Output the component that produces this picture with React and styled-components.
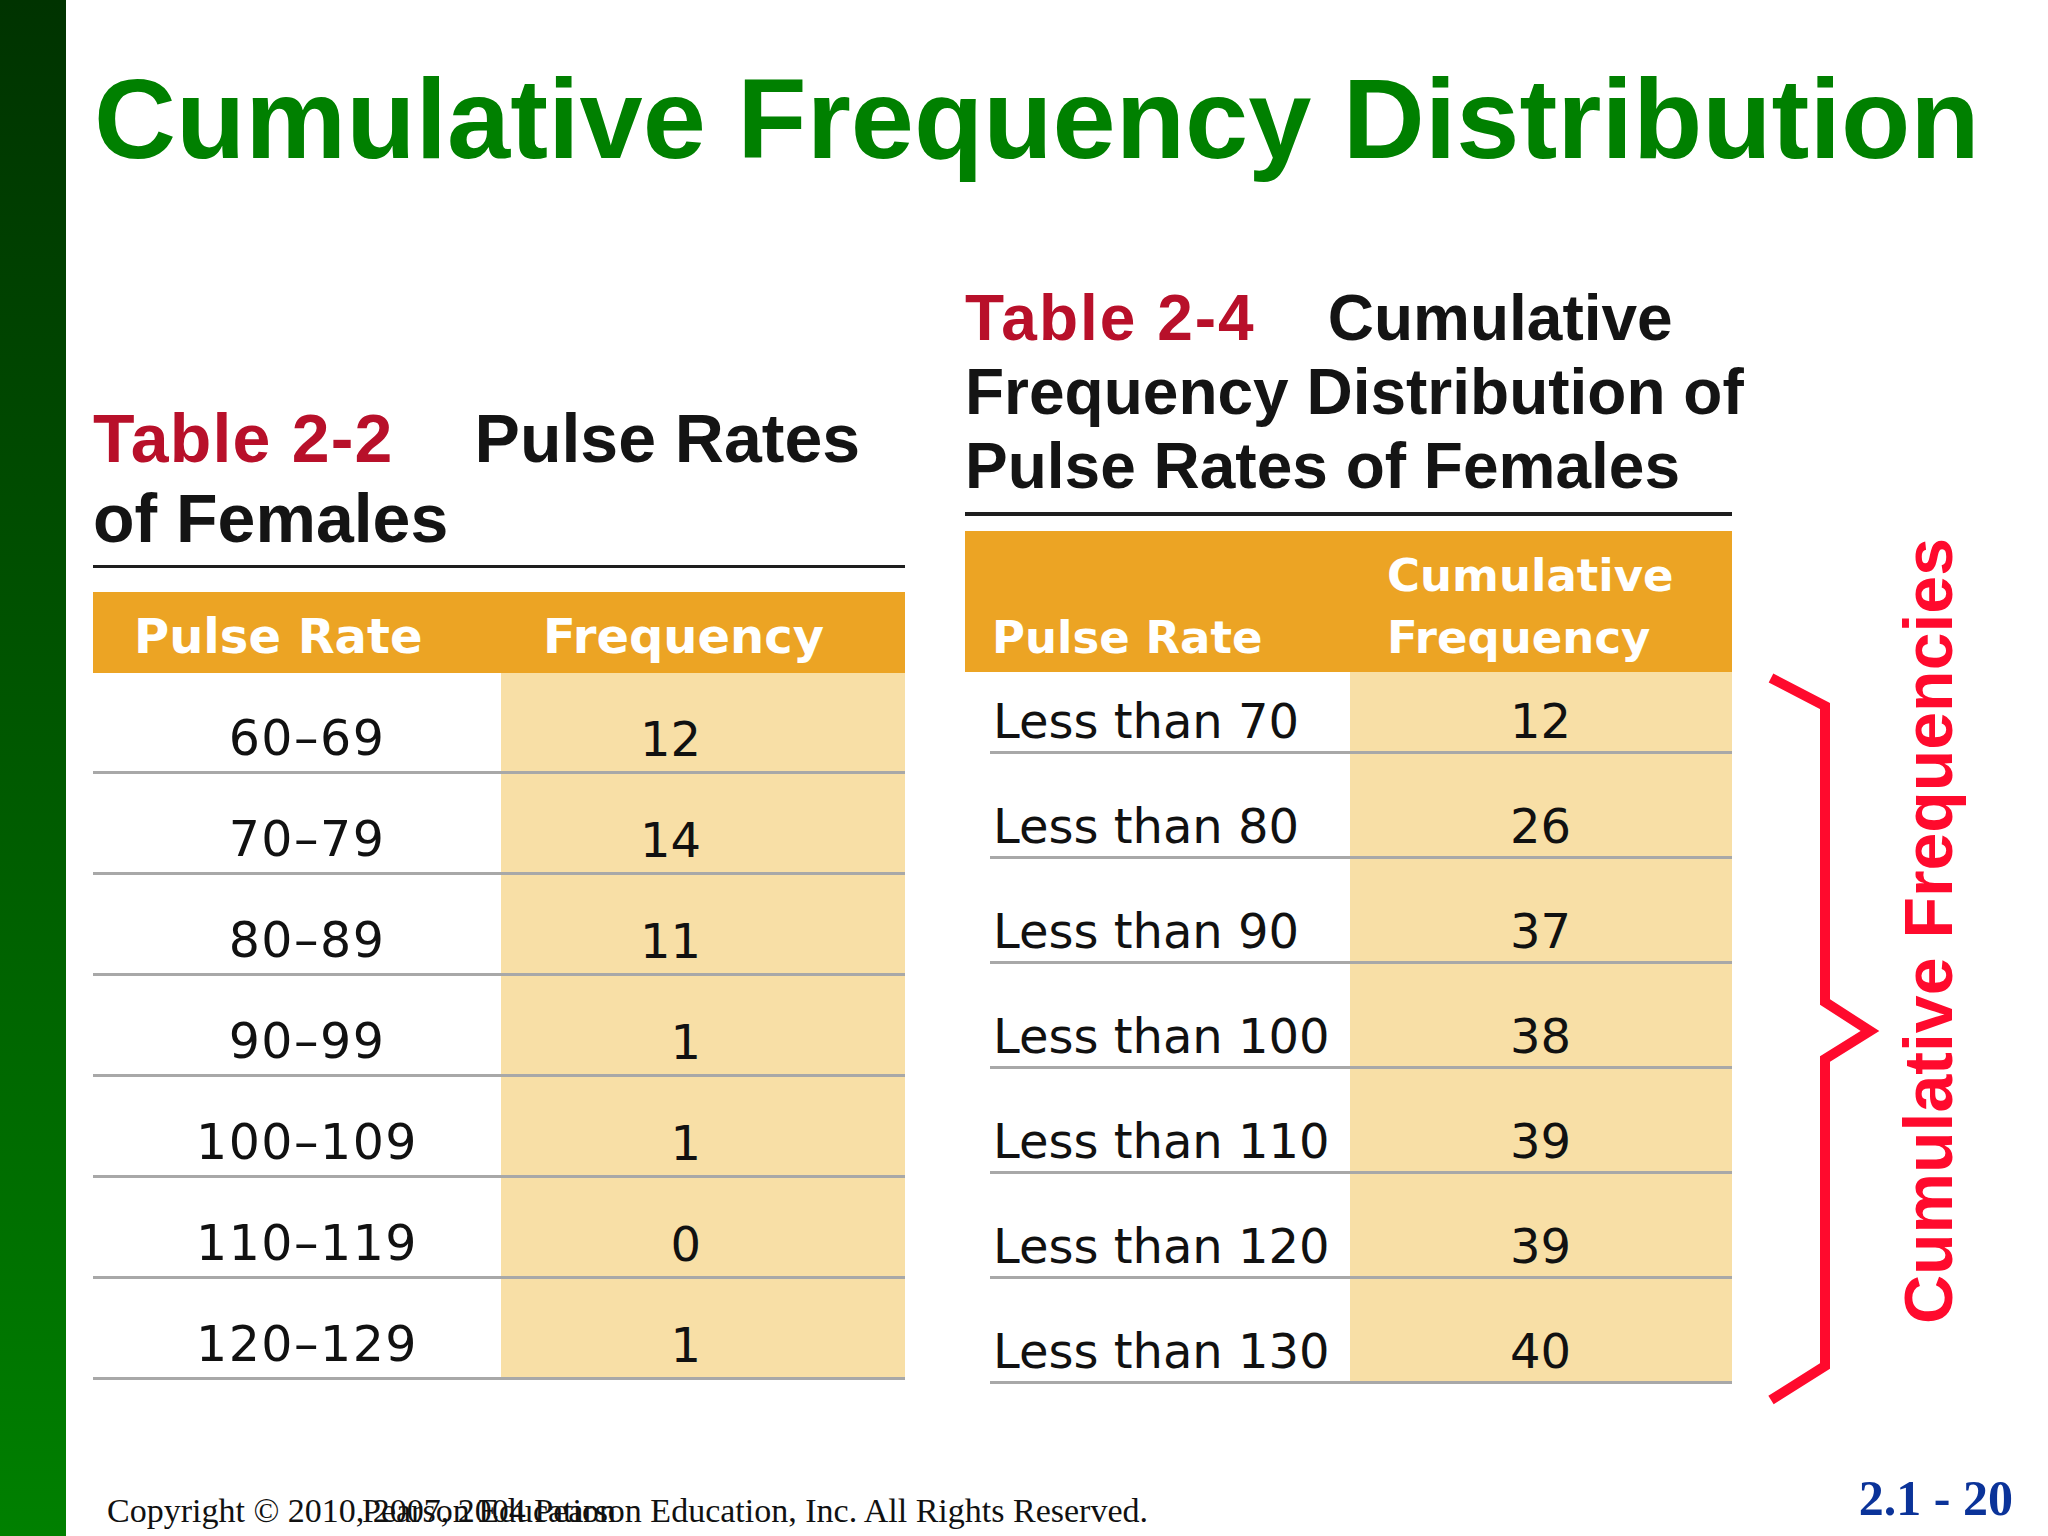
import React from "react";
import styled, { createGlobalStyle } from "styled-components";

const GlobalStyle = createGlobalStyle`
  html, body {
    margin: 0;
    padding: 0;
    background: #ffffff;
  }
  body {
    font-family: "DejaVu Sans", sans-serif;
  }
`;

const Page = styled.div`
  display: flex;
  width: 2048px;
  height: 1536px;
  background: #ffffff;
  overflow: hidden;
`;

const GreenBar = styled.div`
  width: 66px;
  flex: 0 0 66px;
  background: linear-gradient(to bottom, #003300 0%, #008000 100%);
`;

const Main = styled.div`
  position: relative;
  flex: 1;
  display: flex;
  flex-direction: column;
`;

const SlideTitle = styled.h1`
  margin: 62px 0 0 28px;
  font-family: "Liberation Sans", Arial, sans-serif;
  font-weight: 700;
  font-size: 113.5px;
  line-height: 1;
  color: #008000;
  white-space: nowrap;
`;

const TablesRow = styled.div`
  display: flex;
  align-items: flex-start;
  margin-left: 27px;
`;

const TableBlock = styled.section`
  width: ${(p) => p.$width}px;
  margin-top: ${(p) => p.$top}px;
  margin-left: ${(p) => p.$left || 0}px;
  flex: 0 0 auto;
`;

const Caption = styled.div`
  font-family: "Liberation Sans", Arial, sans-serif;
  font-weight: 700;
  font-size: ${(p) => p.$size}px;
  line-height: ${(p) => p.$lh}px;
  color: #141414;
  white-space: nowrap;
`;

const CaptionNum = styled.span`
  color: #b8102a;
  letter-spacing: ${(p) => p.$ls || 0}px;
`;

const CaptionGap = styled.span`
  display: inline-block;
  width: ${(p) => p.$w}px;
`;

const Rule = styled.div`
  height: ${(p) => p.$h}px;
  margin-top: ${(p) => p.$mt}px;
  background: #1e1e1e;
`;

const HeaderRow = styled.div`
  display: grid;
  grid-template-columns: ${(p) => p.$cols};
  height: ${(p) => p.$h}px;
  margin-top: ${(p) => p.$mt}px;
  background: #eca424;
  box-sizing: border-box;
`;

const HeaderCell = styled.div`
  display: flex;
  align-items: flex-end;
  padding-left: ${(p) => p.$pl}px;
  padding-bottom: ${(p) => p.$pb}px;
  font-family: "DejaVu Sans", sans-serif;
  font-weight: 700;
  font-size: ${(p) => p.$size}px;
  line-height: ${(p) => p.$lh};
  color: #ffffff;
  white-space: nowrap;
`;

const BodyRow = styled.div`
  display: grid;
  grid-template-columns: ${(p) => p.$cols};
  height: ${(p) => p.$h}px;
  margin-left: ${(p) => p.$ml || 0}px;
  box-sizing: border-box;
  border-bottom: 3px solid #a8a8a8;
`;

const LabelCell = styled.div`
  display: flex;
  align-items: flex-end;
  justify-content: ${(p) => (p.$center ? "center" : "flex-start")};
  padding-left: ${(p) => p.$pl}px;
  padding-bottom: ${(p) => p.$pb}px;
  font-size: ${(p) => p.$size || 48}px;
  letter-spacing: ${(p) => p.$ls || 0}px;
  line-height: 1;
  color: #111111;
  white-space: nowrap;
`;

const ValueCell = styled.div`
  display: flex;
  align-items: flex-end;
  justify-content: flex-end;
  padding-right: ${(p) => p.$pr}px;
  padding-bottom: ${(p) => p.$pb}px;
  background: #f8dfa6;
  font-size: 48px;
  line-height: 1;
  color: #111111;
`;

const BraceArt = styled.svg`
  flex: 0 0 auto;
  margin-top: 494px;
  margin-left: 28px;
  display: block;
`;

const SideLabel = styled.div`
  flex: 0 0 auto;
  margin-top: 362px;
  margin-left: 14px;
  writing-mode: vertical-rl;
  transform: rotate(180deg);
  font-family: "Liberation Sans", Arial, sans-serif;
  font-weight: 700;
  font-size: 68px;
  line-height: 1;
  color: #ff0a2d;
  white-space: nowrap;
`;

const Footer = styled.footer`
  margin-top: auto;
  display: flex;
  align-items: flex-end;
  justify-content: space-between;
  padding-left: 41px;
  padding-right: 35px;
  position: relative;
`;

const Copyright = styled.div`
  position: relative;
  font-family: "Liberation Serif", "Times New Roman", serif;
  font-size: 34px;
  line-height: 1;
  padding-bottom: 8px;
  color: #111111;
  white-space: nowrap;
`;

const CopyrightOverlay = styled.span`
  position: absolute;
  left: 255px;
  top: 0;
  color: #111111;
`;

const PageNum = styled.div`
  font-family: "Liberation Serif", "Times New Roman", serif;
  font-weight: 700;
  font-size: 50px;
  line-height: 1;
  padding-bottom: 13px;
  color: #0b3399;
  white-space: nowrap;
`;

const leftRows = [
  ["60–69", 12],
  ["70–79", 14],
  ["80–89", 11],
  ["90–99", 1],
  ["100–109", 1],
  ["110–119", 0],
  ["120–129", 1],
];

const rightRows = [
  ["Less than 70", 12],
  ["Less than 80", 26],
  ["Less than 90", 37],
  ["Less than 100", 38],
  ["Less than 110", 39],
  ["Less than 120", 39],
  ["Less than 130", 40],
];

export default function App() {
  return (
    <>
      <GlobalStyle />
      <Page>
        <GreenBar />
        <Main>
          <SlideTitle>Cumulative Frequency Distribution</SlideTitle>
          <TablesRow>
            <TableBlock $width={812} $top={222}>
              <Caption $size={68} $lh={80}>
                <CaptionNum $ls={1.2}>Table 2-2</CaptionNum>
                <CaptionGap $w={81} />
                Pulse Rates
                <br />
                of Females
              </Caption>
              <Rule $h={3} $mt={7} />
              <HeaderRow $cols="408px 404px" $h={81} $mt={24}>
                <HeaderCell $pl={41} $pb={13} $size={48} $lh={1}>
                  Pulse Rate
                </HeaderCell>
                <HeaderCell $pl={42} $pb={13} $size={48} $lh={1}>
                  Frequency
                </HeaderCell>
              </HeaderRow>
              {leftRows.map(([range, f]) => (
                <BodyRow key={range} $cols="408px 404px" $h={101}>
                  <LabelCell $center $pl={20} $pb={8} $size={49} $ls={1.5}>
                    {range}
                  </LabelCell>
                  <ValueCell $pr={204} $pb={8}>
                    {f}
                  </ValueCell>
                </BodyRow>
              ))}
            </TableBlock>

            <TableBlock $width={767} $top={105} $left={60}>
              <Caption $size={64} $lh={74}>
                <CaptionNum $ls={2}>Table 2-4</CaptionNum>
                <CaptionGap $w={72} />
                Cumulative
                <br />
                Frequency Distribution of
                <br />
                Pulse Rates of Females
              </Caption>
              <Rule $h={4} $mt={9} />
              <HeaderRow $cols="385px 382px" $h={141} $mt={15}>
                <HeaderCell $pl={27} $pb={3} $size={45} $lh="62px">
                  Pulse Rate
                </HeaderCell>
                <HeaderCell $pl={37} $pb={3} $size={45} $lh="62px">
                  Cumulative
                  <br />
                  Frequency
                </HeaderCell>
              </HeaderRow>
              {rightRows.map(([label, f], i) => (
                <BodyRow
                  key={label}
                  $cols="360px 382px"
                  $h={i === 0 ? 82 : 105}
                  $ml={25}
                >
                  <LabelCell $pl={3} $pb={6}>
                    {label}
                  </LabelCell>
                  <ValueCell $pr={161} $pb={6}>
                    {f}
                  </ValueCell>
                </BodyRow>
              ))}
            </TableBlock>

            <BraceArt width="120" height="740" viewBox="0 0 120 740">
              <polyline
                points="11,8 65,36 65,332 110,361 65,389 65,696 11,730"
                fill="none"
                stroke="#ff0a2d"
                strokeWidth="10"
                strokeLinejoin="miter"
              />
            </BraceArt>

            <SideLabel>Cumulative Frequencies</SideLabel>
          </TablesRow>

          <Footer>
            <Copyright>
              Copyright © 2010, 2007, 2004 Pearson Education, Inc. All Rights
              Reserved.
              <CopyrightOverlay>Pearson Education</CopyrightOverlay>
            </Copyright>
            <PageNum>2.1 - 20</PageNum>
          </Footer>
        </Main>
      </Page>
    </>
  );
}
